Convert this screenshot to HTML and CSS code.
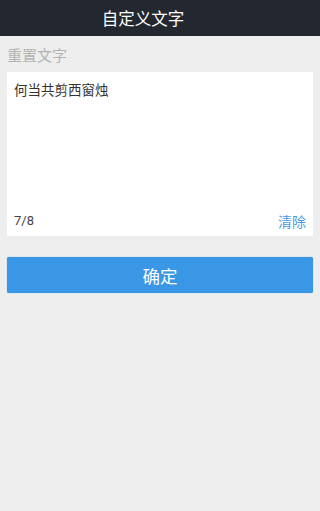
FILE: index.html
```html
<!DOCTYPE html>
<html lang="zh">
<head>
<meta charset="utf-8">
<meta name="viewport" content="width=device-width, initial-scale=1">
<title>自定义文字</title>
<link rel="stylesheet" href="styles.css">
</head>
<body>
<header class="topbar">
  <h1 class="title">自定义文字</h1>
</header>
<main class="content">
  <div class="label">重置文字</div>
  <div class="editor">
    <div class="editor-text">何当共剪西窗烛</div>
    <div class="editor-foot">
      <span class="count">7/8</span>
      <span class="clear">清除</span>
    </div>
  </div>
  <button class="confirm" type="button">确定</button>
</main>
</body>
</html>
```
FILE: styles.css
```css
html, body {
  margin: 0;
  padding: 0;
  background: #eeeeee;
  font-family: "Noto Sans CJK SC", "Noto Sans", "Liberation Sans", sans-serif;
}
.topbar {
  height: 36px;
  background: #23272f;
  display: flex;
  align-items: center;
  justify-content: center;
  padding-right: 34px;
}
.title {
  margin: 0;
  font-size: 16.5px;
  font-weight: normal;
  color: #ffffff;
  line-height: 20px;
}
.content {
  padding: 0 7px;
  display: flex;
  flex-direction: column;
}
.label {
  margin-top: 9px;
  font-size: 15px;
  line-height: 20px;
  color: #b3b3b3;
}
.editor {
  margin-top: 7px;
  background: #ffffff;
  height: 164px;
  box-sizing: border-box;
  padding: 7px 7px 5px 7px;
  display: flex;
  flex-direction: column;
  justify-content: space-between;
}
.editor-text {
  font-size: 13.5px;
  line-height: 20px;
  color: #333333;
}
.editor-foot {
  display: flex;
  justify-content: space-between;
  align-items: flex-end;
  line-height: 20px;
}
.count {
  font-size: 13px;
  color: #444444;
  font-family: "Roboto", "Noto Sans", sans-serif;
}
.clear {
  font-size: 14px;
  color: #4a9be2;
}
.confirm {
  margin: 20px -1px 0 -1px;
  height: 38px;
  border: 1px solid #dde6ee;
  background: #3a97e5;
  background-clip: padding-box;
  color: #ffffff;
  font-family: inherit;
  font-size: 17.5px;
  border-radius: 2px;
  padding: 0;
}
```
